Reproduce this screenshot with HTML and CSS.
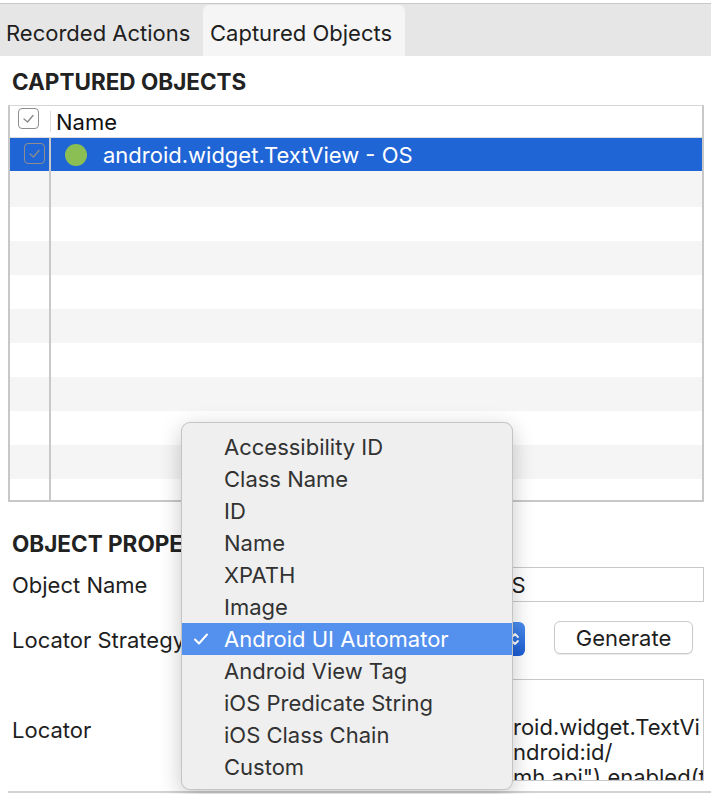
FILE: index.html
```html
<!DOCTYPE html>
<html lang="en">
<head>
<meta charset="utf-8">
<title>Captured Objects</title>
<link rel="stylesheet" href="styles.css">
</head>
<body>
<div class="tabs">
  <div class="tab">Recorded Actions</div>
  <div class="tab active">Captured Objects</div>
</div>
<main class="content">
  <h2 class="section-title">CAPTURED OBJECTS</h2>
  <div class="table">
    <div class="row head">
      <div class="c1"><span class="cb"><svg viewBox="0 0 21 21" width="21" height="21"><polyline points="6,11 9.5,14 15,7.5" fill="none" stroke="#8a8a8a" stroke-width="1.4" stroke-linecap="round" stroke-linejoin="round"/></svg></span></div>
      <div class="c2">Name</div>
    </div>
    <div class="row selected">
      <div class="c1"><span class="cb"><svg viewBox="0 0 21 21" width="21" height="21"><polyline points="6,11 9.5,14 15,7.5" fill="none" stroke="#8a8a8a" stroke-width="1.4" stroke-linecap="round" stroke-linejoin="round"/></svg></span></div>
      <div class="c2"><span class="dot"></span>android.widget.TextView - OS</div>
    </div>
    <div class="row stripe tall"><div class="c1"></div><div class="c2"></div></div>
    <div class="row"><div class="c1"></div><div class="c2"></div></div>
    <div class="row stripe"><div class="c1"></div><div class="c2"></div></div>
    <div class="row"><div class="c1"></div><div class="c2"></div></div>
    <div class="row stripe"><div class="c1"></div><div class="c2"></div></div>
    <div class="row"><div class="c1"></div><div class="c2"></div></div>
    <div class="row stripe"><div class="c1"></div><div class="c2"></div></div>
    <div class="row"><div class="c1"></div><div class="c2"></div></div>
    <div class="row stripe"><div class="c1"></div><div class="c2"></div></div>
    <div class="row last"><div class="c1"></div><div class="c2"></div></div>
  </div>

  <h2 class="section-title props-title">OBJECT PROPERTIES</h2>
  <div class="form">
    <label class="label">Object Name</label>
    <div class="field"><div class="input">android.widget.TextView - OS</div></div>

    <label class="label label-strategy">Locator Strategy</label>
    <div class="field strategy">
      <div class="select">
        <span class="select-value">Android UI Automator</span>
        <svg class="chev" viewBox="0 0 12 20" width="12" height="20"><polyline points="3,8 6,5 9,8" fill="none" stroke="#fff" stroke-width="1.8" stroke-linecap="round" stroke-linejoin="round"/><polyline points="3,12 6,15 9,12" fill="none" stroke="#fff" stroke-width="1.8" stroke-linecap="round" stroke-linejoin="round"/></svg>
      </div>
      <button class="btn">Generate</button>
    </div>

    <label class="label label-locator">Locator</label>
    <div class="field field-locator"><div class="textarea"><div class="tline"><span class="tpre">new UiSelector().className("and</span>roid.widget.TextVi</div><div class="tline"><span class="tpre">ew").resourceId("com.kms.katalon:id/a</span>ndroid:id/</div><div class="tline"><span class="tpre">text").packageName("com.kms.katalon.</span>mh.api").enabled(true)</div></div></div>
  </div>
  <div class="bottom-line"></div>
</main>

<div class="menu">
  <div class="item">Accessibility ID</div>
  <div class="item">Class Name</div>
  <div class="item">ID</div>
  <div class="item">Name</div>
  <div class="item">XPATH</div>
  <div class="item">Image</div>
  <div class="item checked"><svg class="check" viewBox="0 0 16 14" width="16" height="14"><polyline points="2,7.5 6,11.5 14,2.5" fill="none" stroke="#fff" stroke-width="2" stroke-linecap="round" stroke-linejoin="round"/></svg>Android UI Automator</div>
  <div class="item">Android View Tag</div>
  <div class="item">iOS Predicate String</div>
  <div class="item">iOS Class Chain</div>
  <div class="item">Custom</div>
</div>
</body>
</html>
```

FILE: styles.css
```css
* { box-sizing: border-box; }
html, body { margin: 0; padding: 0; background: #fff; }
body {
  width: 711px;
  height: 794px;
  overflow: hidden;
  position: relative;
  font-family: Inter, "Liberation Sans", sans-serif;
  font-size: 22px;
  color: #1e1e1e;
}

.tabs {
  margin-top: 3px;
  height: 53px;
  border-top: 1px solid #c9c9c9;
  background: #e6e6e6;
  display: flex;
  align-items: flex-end;
}
.tab {
  height: 51px;
  width: 203px;
  padding: 4px 0 0 6px;
  display: flex;
  align-items: center;
  white-space: nowrap;
  color: #1e1e1e;
}
.tab.active {
  width: 202px;
  padding-left: 7px;
  background: #f5f5f5;
  border-radius: 6px 6px 0 0;
}

.content { padding: 0 7px 0 8px; }

.section-title {
  margin: 14px 0 11px 4px;
  font-size: 22.5px;
  line-height: 24px;
  font-weight: 700;
  color: #222;
  white-space: nowrap;
}

.table {
  border-top: 1px solid #d6d6d6;
  border-left: 2px solid #c8c8c8;
  border-right: 2px solid #c8c8c8;
  border-bottom: 2px solid #c8c8c8;
  width: 696px;
}
.row { display: flex; height: 34px; }
.row .c1 { width: 41px; border-right: 2px solid #c8c8c8; flex: none; }
.row .c2 { flex: 1; display: flex; align-items: center; }
.row.head { height: 32px; border-bottom: 1px solid #dcdcdc; }
.row.head .c1 { border-right: none; position: relative; padding: 2px 0 0 8px; }
.row.head .c1::after {
  content: "";
  position: absolute;
  right: 0;
  top: 5px;
  height: 21px;
  width: 1px;
  background: #dedede;
}
.row.head .c2 { padding-left: 5px; color: #111; }
.row.selected { height: 33px; background: #1f65d6; color: #fff; }
.row.selected .c1 { padding: 5px 0 0 14px; }
.row.selected .c2 { padding-left: 14px; }
.row.stripe { background: #f4f5f4; }
.row.tall { height: 36px; }
.row.last { height: 21px; }

.cb {
  display: block;
  width: 21px;
  height: 21px;
  border: 1.5px solid #8e8e8e;
  border-radius: 4px;
}
.cb svg { display: block; margin: -1.5px 0 0 -1.5px; }

.dot {
  width: 22px;
  height: 22px;
  border-radius: 50%;
  background: #8bbf54;
  margin-right: 16px;
  flex: none;
}

.props-title { margin-top: 30px; }

.form {
  display: grid;
  grid-template-columns: 193px 1fr;
  grid-template-rows: 35px 35px 108px;
  row-gap: 18px;
  margin-left: 4px;
}
.label { display: flex; align-items: center; white-space: nowrap; color: #1e1e1e; }
.label-strategy { padding-top: 5px; }
.label-locator, .field-locator { margin-top: 6px; }
.field { min-width: 0; }
.input {
  height: 35px;
  border: 1px solid #c9c9c9;
  padding: 0 10px;
  display: flex;
  align-items: center;
  white-space: nowrap;
  overflow: hidden;
}
.strategy { display: flex; align-items: center; gap: 29px; }
.select {
  width: 320px;
  height: 34px;
  margin-top: 2px;
  border-radius: 6px;
  background: linear-gradient(#4a8ef0, #1c5cd3);
  color: #fff;
  display: flex;
  align-items: center;
  justify-content: space-between;
  padding: 0 4px 0 10px;
}
.chev { display: block; }
.btn {
  width: 139px;
  height: 33px;
  border: 1px solid #cacaca;
  border-radius: 6px;
  background: #fff;
  box-shadow: 0 1px 1px rgba(0,0,0,0.08);
  font: inherit;
  color: #1e1e1e;
  padding: 0;
}
.textarea {
  height: 102px;
  border: 1px solid #c9c9c9;
  padding: 35px 8px 0 8px;
  overflow: hidden;
  line-height: 25px;
}
.tline { white-space: pre; height: 25px; }
.tpre {
  display: inline-block;
  width: 299px;
  height: 25px;
  overflow: hidden;
  vertical-align: top;
}

.bottom-line {
  margin-top: 10px;
  height: 2px;
  background: #d2d2d2;
  margin-right: -7px;
}

.menu {
  position: absolute;
  left: 181px;
  top: 422px;
  width: 332px;
  height: 368px;
  padding: 8px 0 7px;
  background: #efefef;
  border: 1px solid rgba(0,0,0,0.18);
  border-radius: 9px;
  box-shadow: 0 6px 22px rgba(0,0,0,0.22);
  color: #323232;
}
.item {
  height: 32px;
  line-height: 32px;
  padding-left: 42px;
  position: relative;
  white-space: nowrap;
}
.item.checked { background: #5490ee; color: #fff; }
.check { position: absolute; left: 11px; top: 9px; }
```
